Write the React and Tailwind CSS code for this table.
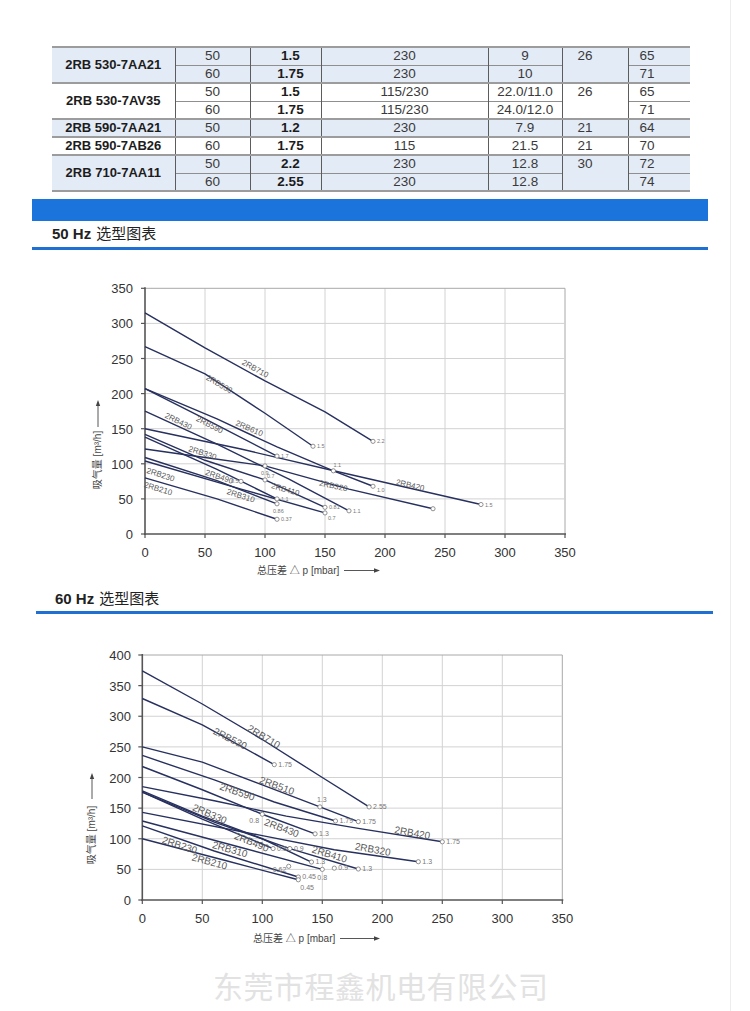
import React from 'react';

const FONT = "'Liberation Sans', 'Noto Sans CJK SC', Arial, sans-serif";

// spec table, grouped by model
const groups = [
  { blue: true, model: '2RB 530-7AA21', c6: '26', rows: [['50', '1.5', '230', '9', '65'], ['60', '1.75', '230', '10', '71']] },
  { blue: false, model: '2RB 530-7AV35', c6: '26', rows: [['50', '1.5', '115/230', '22.0/11.0', '65'], ['60', '1.75', '115/230', '24.0/12.0', '71']] },
  { blue: true, model: '2RB 590-7AA21', c6: '21', rows: [['50', '1.2', '230', '7.9', '64']] },
  { blue: false, model: '2RB 590-7AB26', c6: '21', rows: [['60', '1.75', '115', '21.5', '70']] },
  { blue: true, model: '2RB 710-7AA11', c6: '30', rows: [['50', '2.2', '230', '12.8', '72'], ['60', '2.55', '230', '12.8', '74']] },
];

function SpecTable() {
  return (
    <table className="table-fixed w-[638px] border-collapse text-[13.5px] leading-[16px] text-[#3a3a3a] ml-[52px]" style={{ fontFamily: FONT }}>
      <colgroup>
        <col className="w-[123px]" />
        <col className="w-[75px]" />
        <col className="w-[71px]" />
        <col className="w-[167px]" />
        <col className="w-[74px]" />
        <col className="w-[66px]" />
        <col className="w-[62px]" />
      </colgroup>
      <tbody>
        {groups.map((g) =>
          g.rows.map((r, i) => {
            const bg = g.blue ? 'bg-[#e3ebf6]' : 'bg-white';
            const top = i === 0 ? 'border-t-2 border-t-[#9c9c9c]' : 'border-t border-t-[#8f8f8f]';
            const cell = `p-0 text-center border-l border-l-[#5c5c5c] ${top}`;
            return (
              <tr key={g.model + i} className={`${bg} h-[18px]`}>
                {i === 0 && (
                  <td rowSpan={g.rows.length} className="p-0 text-center font-bold text-[#1c1c1c] text-[13px] border-t-2 border-t-[#9c9c9c]">
                    {g.model}
                  </td>
                )}
                <td className={cell}>{r[0]}</td>
                <td className={`${cell} font-bold text-[#1c1c1c] pl-[10px]`}>{r[1]}</td>
                <td className={cell}>{r[2]}</td>
                <td className={cell}>{r[3]}</td>
                {i === 0 && (
                  <td rowSpan={g.rows.length} className="p-0 pl-[15px] text-left align-top border-l border-l-[#5c5c5c] border-t-2 border-t-[#9c9c9c]">
                    {g.c6}
                  </td>
                )}
                <td className={`${cell} text-left pl-[11px]`}>{r[4]}</td>
              </tr>
            );
          })
        )}
        <tr>
          <td colSpan={7} className="p-0 h-0 border-t-2 border-t-[#9c9c9c]" />
        </tr>
      </tbody>
    </table>
  );
}

function SectionTitle({ hz, className }) {
  return (
    <div className={`flex items-center text-[15px] text-[#222] ${className}`} style={{ fontFamily: FONT }}>
      <span className="font-bold">{hz} Hz</span>
      <span className="ml-[5px]">选型图表</span>
    </div>
  );
}

const line = '#27305e';

function Chart({ top, height, X0, Y0, ky, qMax, lines, labels, marks, lblSize, mkSize, yT, xT, ylx }) {
  const X = (p) => X0 + 1.2 * p;
  const Y = (q) => Y0 - ky * q;
  const ps = [0, 50, 100, 150, 200, 250, 300, 350];
  const qs = [];
  for (let q = 0; q <= qMax; q += 50) qs.push(q);
  const right = X(350);
  const topY = Y(qMax);
  return (
    <svg width="750" height={height} viewBox={`0 ${top} 750 ${height}`} className="block" fontFamily={FONT}>
      {/* grid */}
      {ps.slice(1).map((p) => (
        <line key={'v' + p} x1={X(p)} y1={topY} x2={X(p)} y2={Y0} stroke={p === 350 ? '#a8a8a8' : '#d2d2d2'} strokeWidth="1" />
      ))}
      {qs.slice(1).map((q) => (
        <line key={'h' + q} x1={X0} y1={Y(q)} x2={right} y2={Y(q)} stroke={q === qMax ? '#a8a8a8' : '#d2d2d2'} strokeWidth="1" />
      ))}
      {/* axes */}
      <line x1={X0} y1={topY - 1} x2={X0} y2={Y0 + 1} stroke="#555" strokeWidth="1.6" />
      <line x1={X0 - 1} y1={Y0} x2={right + 1} y2={Y0} stroke="#555" strokeWidth="1.6" />
      {ps.map((p) => (
        <line key={'tx' + p} x1={X(p)} y1={Y0} x2={X(p)} y2={Y0 + 4} stroke="#555" strokeWidth="1.2" />
      ))}
      {qs.map((q) => (
        <line key={'ty' + q} x1={X0 - 4} y1={Y(q)} x2={X0} y2={Y(q)} stroke="#555" strokeWidth="1.2" />
      ))}
      {ps.map((p) => (
        <text key={'lx' + p} x={X(p)} y={Y0 + 23} fontSize="13" fill="#333" textAnchor="middle">{p}</text>
      ))}
      {qs.map((q) => (
        <text key={'ly' + q} x={ylx} y={Y(q) + 5} fontSize="13" fill="#333" textAnchor="end">{q}</text>
      ))}

      {/* curves */}
      {lines.map((pts, i) => (
        <polyline key={'c' + i} points={pts.map(([p, q]) => `${X(p)},${Y(q)}`).join(' ')} fill="none" stroke={line} strokeWidth="1.4" strokeLinejoin="round" />
      ))}
      {labels.map(([t, p, q, a]) => (
        <text key={t} x={X(p)} y={Y(q) + 3} fontSize={lblSize} fill="#5a5a5a" textAnchor="middle" transform={`rotate(${a} ${X(p)} ${Y(q)})`}>
          {t}
        </text>
      ))}
      {marks.map(([p, q, t, dx = 4, dy = 2], i) => (
        <g key={'m' + i}>
          <circle cx={X(p)} cy={Y(q)} r="2.1" fill="#fff" stroke="#777" strokeWidth="0.8" />
          {t && (
            <text x={X(p) + dx} y={Y(q) + dy} fontSize={mkSize} fill="#777">{t}</text>
          )}
        </g>
      ))}

      {/* y axis title */}
      <text x={yT.x} y={yT.y} fontSize="10" fill="#444" textAnchor="middle" transform={`rotate(-90 ${yT.x} ${yT.y})`}>
        吸气量 [m³/h]
      </text>
      <line x1={yT.x - 3} y1={yT.a2} x2={yT.x - 3} y2={yT.a1 + 4} stroke="#444" strokeWidth="0.9" />
      <polygon points={`${yT.x - 3},${yT.a1} ${yT.x - 5.2},${yT.a1 + 6} ${yT.x - 0.8},${yT.a1 + 6}`} fill="#444" />

      {/* x axis title */}
      <text x={xT.x} y={xT.y} fontSize="10" fill="#444">总压差 △ p [mbar]</text>
      <line x1={xT.x + 87} y1={xT.y - 3.5} x2={xT.a - 4} y2={xT.y - 3.5} stroke="#444" strokeWidth="0.9" />
      <polygon points={`${xT.a},${xT.y - 3.5} ${xT.a - 6},${xT.y - 5.7} ${xT.a - 6},${xT.y - 1.3}`} fill="#444" />
    </svg>
  );
}

const lines50 = [
  [[0, 315], [50, 265], [100, 218], [150, 174], [190, 132]],
  [[0, 267], [50, 228], [100, 172], [140, 125]],
  [[0, 207], [50, 164], [110, 111]],
  [[0, 207], [60, 164], [110, 124], [157, 90], [190, 68]],
  [[0, 175], [60, 128], [120, 78], [170, 33]],
  [[0, 150], [80, 121], [160, 89], [280, 42]],
  [[0, 121], [50, 109], [100, 97], [170, 64], [240, 36]],
  [[0, 142], [50, 105], [100, 77], [150, 38]],
  [[0, 138], [60, 92], [110, 50]],
  [[0, 109], [60, 76], [110, 43]],
  [[0, 104], [80, 64], [150, 30]],
  [[0, 80], [60, 50], [110, 21]],
];

const labels50 = [
  ['2RB710', 92, 236, 29],
  ['2RB530', 62, 214, 30],
  ['2RB590', 54, 156, 27],
  ['2RB610', 87, 151, 23],
  ['2RB430', 28, 161, 26],
  ['2RB330', 48, 116, 18],
  ['2RB490', 62, 82, 19],
  ['2RB410', 117, 64, 16],
  ['2RB310', 80, 55, 18],
  ['2RB230', 13, 85, 18],
  ['2RB210', 11, 65, 17],
  ['2RB320', 157, 69, 12],
  ['2RB420', 221, 70, 13],
];

const marks50 = [
  [190, 132, '2.2'],
  [140, 125, '1.5'],
  [110, 111, '1.7'],
  [157, 90, '1.1', 0, -4],
  [190, 68, '1.0', 4, 6],
  [170, 33, '1.1'],
  [280, 42, '1.5'],
  [240, 36, ''],
  [100, 97, '0.9', -4, 9],
  [100, 77, '0.7', 2, -2],
  [80, 75, '0.5', -10, 2],
  [110, 50, '1.1'],
  [110, 43, '0.86', -4, 9],
  [110, 21, '0.37'],
  [150, 38, '0.81'],
  [150, 30, '0.7', 3, 7],
];

const lines60 = [
  [[0, 374], [50, 320], [100, 262], [150, 200], [189, 152]],
  [[0, 329], [50, 286], [110, 221]],
  [[0, 250], [50, 225], [100, 188], [148, 152], [180, 128]],
  [[0, 236], [60, 196], [110, 160], [161, 129]],
  [[0, 218], [50, 180], [100, 140], [144, 108]],
  [[0, 185], [60, 162], [120, 137], [180, 117], [250, 95]],
  [[0, 143], [100, 105], [160, 82], [230, 62.5]],
  [[0, 178], [50, 137], [100, 100], [141, 62]],
  [[0, 176], [50, 132], [109, 84]],
  [[0, 176], [60, 127], [123, 84], [180, 50.6]],
  [[0, 129], [80, 87], [150, 50]],
  [[0, 121], [60, 80], [130, 37.5]],
  [[0, 100], [70, 64], [130, 33]],
];

const labels60 = [
  ['2RB710', 101, 266, 31],
  ['2RB530', 73, 263, 27],
  ['2RB510', 112, 186, 20],
  ['2RB590', 79, 176, 19],
  ['2RB430', 116, 117, 21],
  ['2RB420', 225, 109, 10],
  ['2RB320', 192, 82, 10],
  ['2RB410', 156, 74, 17],
  ['2RB330', 56, 140, 23],
  ['2RB490', 91, 94, 22],
  ['2RB310', 73, 82, 16],
  ['2RB230', 31, 89, 18],
  ['2RB210', 56, 62, 15],
];

const marks60 = [
  [189, 152, '2.55'],
  [110, 221, '1.75'],
  [148, 152, '1.3', -3, -5],
  [161, 129, '1.79'],
  [180, 128, '1.75'],
  [144, 108, '1.3'],
  [100, 140, '0.8', -13, 9],
  [250, 95, '1.75'],
  [230, 62.5, '1.3'],
  [141, 62, '1.3'],
  [122, 55, '0.62', -16, 6],
  [109, 84, '0.84'],
  [123, 84, '0.9'],
  [180, 50.6, '1.3'],
  [150, 50, '0.8', -5, 11],
  [160, 52, '0.9'],
  [130, 37.5, '0.45'],
  [130, 33, '0.45', 2, 10],
];

export default function App() {
  return (
    <div className="w-[750px] min-h-[1011px] bg-white">
      <div className="w-[731px] min-h-[1011px] border-r border-r-[#ededed] pt-[46px]">
        <SpecTable />

        <div className="mt-[7px] ml-[32px] w-[676px] h-[22px] bg-[#1b74db]" />
        <SectionTitle hz="50" className="h-[26px] pl-[52px] pt-[1px]" />
        <div className="ml-[32px] w-[676px] h-[3px] bg-[#1f70d2]" />

        <Chart
          top={251}
          height={337}
          X0={145}
          Y0={535}
          ky={0.702}
          qMax={350}
          lines={lines50}
          labels={labels50}
          marks={marks50}
          lblSize={8}
          mkSize={5.5}
          ylx={133}
          yT={{ x: 101, y: 461, a1: 401, a2: 428 }}
          xT={{ x: 257, y: 575, a: 380 }}
        />

        <SectionTitle hz="60" className="h-[24px] pl-[55px]" />
        <div className="ml-[36px] w-[677px] h-[3px] bg-[#1f70d2]" />

        <Chart
          top={615}
          height={340}
          X0={142.3}
          Y0={901}
          ky={0.6125}
          qMax={400}
          lines={lines60}
          labels={labels60}
          marks={marks60}
          lblSize={10}
          mkSize={7}
          ylx={131}
          yT={{ x: 95, y: 836, a1: 774, a2: 800 }}
          xT={{ x: 253, y: 943, a: 380 }}
        />

        <div className="h-[56px] pt-[6px] flex items-center pl-[213px]">
          <span className="text-[30px] leading-none tracking-[0.5px] text-[#e2e2e2]" style={{ fontFamily: "'Noto Sans CJK SC', sans-serif" }}>
            东莞市程鑫机电有限公司
          </span>
        </div>
      </div>
    </div>
  );
}
